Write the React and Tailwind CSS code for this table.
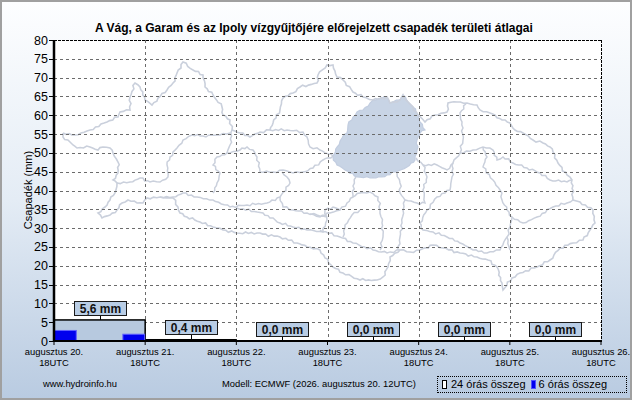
const FONT = '"Liberation Sans", Arial, sans-serif';

// plot geometry (page coordinates)
const X0 = 54;
const X1 = 601;
const Y0 = 341;
const YT = 40;
const DX = (X1 - X0) / 6;
const yv = (v) => Y0 - (v * (Y0 - YT)) / 80;

// jagged outline so the basin borders look like traced rivers
function jag(pts, amp = 0.8) {
  const out = [];
  let k = 0;
  for (let i = 0; i < pts.length - 1; i++) {
    const [x1, y1] = pts[i];
    const [x2, y2] = pts[i + 1];
    const len = Math.hypot(x2 - x1, y2 - y1) || 1;
    const n = Math.max(1, Math.round(len / 3));
    const nx = -(y2 - y1) / len;
    const ny = (x2 - x1) / len;
    for (let j = 0; j < n; j++) {
      const t = j / n;
      const o = j === 0 ? 0 : Math.sin(k * 2.7) * amp + Math.sin(k * 1.3) * amp * 0.6;
      k++;
      out.push([x1 + (x2 - x1) * t + nx * o, y1 + (y2 - y1) * t + ny * o]);
    }
  }
  out.push(pts[pts.length - 1]);
  return out.map((p) => p[0].toFixed(1) + ',' + p[1].toFixed(1)).join(' ');
}

const outline = [
  [63, 133], [75, 135], [90, 130], [107, 122], [118, 117], [120, 112], [130, 110], [130, 97], [135, 83], [140, 87],
  [145, 100], [152, 105], [158, 98], [167, 90], [173, 83], [177, 73], [183, 62], [193, 70], [203, 75], [205, 87],
  [213, 95], [222, 107], [223, 115], [230, 120], [232, 130], [240, 133], [250, 137], [260, 132], [270, 130], [273, 123],
  [280, 110], [283, 98], [293, 93], [300, 87], [317, 83], [318, 75], [327, 65], [333, 65], [337, 77], [343, 80],
  [353, 92], [363, 97], [373, 100], [387, 97], [390, 103], [400, 100], [403, 95], [408, 102], [413, 107], [418, 115],
  [425, 122], [435, 115], [447, 112], [448, 103], [457, 102], [467, 103], [477, 105], [480, 110], [490, 113], [502, 120],
  [510, 123], [515, 130], [523, 133], [533, 140], [543, 143], [550, 147], [553, 152], [558, 163], [567, 175], [572, 180],
  [573, 200], [580, 202], [593, 210], [595, 223], [590, 230], [583, 240], [573, 243], [560, 248], [550, 260], [537, 267],
  [520, 273], [512, 278], [503, 290], [502, 283], [497, 267], [488, 260], [477, 257], [460, 253], [443, 248], [433, 245],
  [420, 250], [410, 252], [400, 250], [390, 257], [388, 267], [383, 277], [377, 280], [360, 280], [343, 273], [333, 267],
  [325, 258], [320, 250], [307, 247], [297, 243], [280, 237], [257, 233], [237, 233], [223, 230], [213, 227], [200, 222],
  [187, 217], [180, 213], [178, 207], [173, 198], [160, 197], [147, 198], [143, 203], [137, 203], [128, 200], [122, 203],
  [117, 210], [110, 215], [102, 218], [98, 213], [105, 207], [110, 200], [115, 193], [117, 183], [113, 180], [118, 173],
  [118, 162], [113, 153], [110, 148], [103, 147], [98, 150], [90, 147], [77, 148], [73, 145], [70, 142], [63, 137], [63, 133],
];

const inner = [
  [[117, 183], [130, 182], [140, 178], [150, 182], [160, 182], [168, 177], [167, 165], [170, 157], [177, 148], [183, 140], [192, 135], [203, 136], [220, 135], [230, 133]],
  [[160, 197], [173, 197], [183, 193], [197, 197], [213, 200], [230, 207], [247, 205], [267, 203], [280, 197], [290, 183], [287, 177], [282, 172]],
  [[213, 193], [217, 183], [220, 173], [213, 165], [217, 157], [227, 153], [240, 150], [247, 147], [253, 150], [257, 157], [260, 172], [273, 172], [283, 170], [293, 173], [303, 172], [313, 168], [323, 160], [333, 156]],
  [[232, 130], [230, 145], [227, 153]],
  [[270, 130], [287, 130], [303, 132], [307, 137], [310, 147], [320, 150], [333, 156]],
  [[237, 208], [263, 213], [280, 223], [293, 227], [307, 230], [323, 232], [327, 220], [325, 210], [333, 207], [340, 210]],
  [[280, 197], [283, 207], [293, 210], [307, 213], [317, 215], [327, 217]],
  [[356, 177], [353, 186], [353, 197], [360, 193], [370, 192], [378, 197], [380, 210], [382, 223], [383, 237], [380, 250]],
  [[353, 197], [347, 203], [340, 210], [330, 213], [320, 217], [310, 214]],
  [[397, 173], [400, 183], [400, 193], [405, 200], [403, 210], [402, 223], [400, 237], [398, 250]],
  [[416, 158], [423, 165], [427, 177], [423, 190], [425, 203], [417, 203], [405, 200]],
  [[423, 165], [437, 165], [447, 170], [453, 163], [460, 153], [463, 140], [462, 122], [460, 113], [466, 104]],
  [[460, 153], [473, 150], [483, 147], [493, 150], [497, 160], [503, 157], [513, 163], [527, 168], [540, 173], [550, 180], [567, 182], [572, 180]],
  [[483, 147], [487, 157], [483, 167], [493, 180], [500, 190], [502, 200], [507, 210], [512, 217], [510, 227], [507, 237], [510, 250]],
  [[453, 163], [452, 177], [450, 190], [437, 197], [427, 210], [420, 223], [423, 230], [433, 232], [447, 237], [460, 243], [473, 250], [487, 253], [500, 250], [507, 237]],
  [[512, 217], [523, 223], [537, 217], [553, 207], [567, 203], [573, 200]],
  [[320, 230], [340, 237], [353, 243], [373, 250], [387, 253], [400, 250]],
  [[343, 237], [345, 225], [352, 215], [360, 210]],
];

const fillRegion = [
  [373, 100], [387, 97], [390, 103], [400, 100], [403, 95], [408, 102], [413, 107], [418, 115], [420, 122], [425, 130],
  [420, 133], [417, 140], [417, 150], [415, 160], [407, 167], [395, 172], [382, 177], [370, 178], [357, 177], [345, 170],
  [337, 165], [333, 157], [337, 147], [342, 138], [347, 133], [348, 125], [353, 117], [357, 112], [363, 110], [370, 103], [373, 100],
];

const six = [2.8, 0, 0.1, 1.8];
const totals = ['5,6 mm', '0,4 mm', '0,0 mm', '0,0 mm', '0,0 mm', '0,0 mm'];
const totalVals = [5.6, 0.4, 0, 0, 0, 0];

function Chart() {
  const ticks = [];
  for (let v = 0; v <= 80; v += 5) ticks.push(v);
  return (
    <svg width="628" height="336" viewBox="2 34 628 336" className="block" style={{ fontFamily: FONT }}>
      <rect x={X0} y={YT} width={X1 - X0} height={Y0 - YT} fill="#ffffff" />

      {/* basin map */}
      <polygon points={jag(fillRegion, 0.7)} fill="#c8d4e5" stroke="#c2cde0" strokeWidth="1.2" />
      <polyline points={jag(outline)} fill="none" stroke="#cad0dc" strokeWidth="1.6" />
      {inner.map((l, i) => (
        <polyline key={i} points={jag(l)} fill="none" stroke="#cad0dc" strokeWidth="1.5" />
      ))}

      {/* grid */}
      {ticks.filter((v) => v > 0 && v < 80).map((v) => (
        <line key={v} x1={X0} x2={X1} y1={Math.round(yv(v)) + 0.5} y2={Math.round(yv(v)) + 0.5} stroke="#6b6b6b" strokeDasharray="3 3" />
      ))}
      {[1, 2, 3, 4, 5].map((i) => (
        <line key={i} x1={Math.round(X0 + DX * i) + 0.5} x2={Math.round(X0 + DX * i) + 0.5} y1={YT} y2={Y0} stroke="#6b6b6b" strokeDasharray="3 3" />
      ))}
      <line x1={X0} x2={X1} y1={YT + 0.5} y2={YT + 0.5} stroke="#000" strokeDasharray="3 1" />
      <line x1={X1 + 0.5} x2={X1 + 0.5} y1={YT} y2={Y0} stroke="#000" strokeDasharray="3 1" />

      {/* 24h bars */}
      {totalVals.map((v, i) =>
        v > 0 ? (
          <rect key={i} x={X0 + DX * i} y={yv(v)} width={DX} height={Y0 - yv(v)} fill="#b7c9df" stroke="#000" strokeWidth={v > 1 ? 1.5 : 1} />
        ) : null
      )}
      {/* 6h bars */}
      {six.map((v, i) =>
        v > 0 ? (
          <rect key={i} x={X0 + (DX / 4) * i + 0.5} y={yv(v)} width={DX / 4 - 1} height={Y0 - yv(v)} fill="#0000ee" stroke="#6060ff" strokeWidth="1" />
        ) : null
      )}

      {/* axes */}
      <line x1={X0} x2={X0} y1={YT} y2={Y0 + 1} stroke="#000" strokeWidth="2.5" />
      <line x1={X0} x2={X1 + 1} y1={Y0} y2={Y0} stroke="#000" strokeWidth="2" />
      {ticks.map((v) => (
        <g key={v}>
          <line x1={49} x2={X0} y1={Math.round(yv(v)) + 0.5} y2={Math.round(yv(v)) + 0.5} stroke="#000" />
          <text x={48} y={yv(v) + 4.5} textAnchor="end" fontSize="12.5" fill="#000">{v}</text>
        </g>
      ))}
      <text transform="translate(28 190) rotate(-90)" textAnchor="middle" dominantBaseline="central" fontSize="11" fill="#000">
        Csapadék (mm)
      </text>

      {/* x labels */}
      {[0, 1, 2, 3, 4, 5, 6].map((i) => (
        <g key={i}>
          <line x1={X0 + DX * i} x2={X0 + DX * i} y1={Y0} y2={Y0 + 4} stroke="#000" />
          <text x={X0 + DX * i} y={355} textAnchor="middle" fontSize="9.4" fill="#000">augusztus {20 + i}.</text>
          <text x={X0 + DX * i} y={366} textAnchor="middle" fontSize="9.4" fill="#000">18UTC</text>
        </g>
      ))}

      {/* value labels */}
      {totals.map((t, i) => {
        const cx = Math.round(X0 + DX * (i + 0.5)) + 0.5;
        const top = yv(totalVals[i]);
        const bottom = Math.round(top - 5) + 0.5;
        return (
          <g key={i}>
            <line x1={cx} x2={cx} y1={bottom} y2={top} stroke="#000" />
            <rect x={cx - 26} y={bottom - 14} width="52" height="14" fill="#b9cde5" stroke="#1a1a1a" />
            <text x={cx} y={bottom - 3} textAnchor="middle" fontSize="12" fontWeight="bold" fill="#111">{t}</text>
          </g>
        );
      })}
    </svg>
  );
}

export default function App() {
  return (
    <div className="w-[633px] h-[401px] bg-white" style={{ fontFamily: FONT }}>
      <div className="w-[632px] h-[400px] border-2 border-[#a0a0a0] bg-linear-to-b from-[#fdfeff] via-[#e4ecf5] to-[#b9cbe1] flex flex-col">
        <div className="h-[32px] shrink-0 pt-[19px] pl-[93px] text-[12px] leading-[14px] font-bold text-black whitespace-nowrap">
          A Vág, a Garam és az Ipoly vízgyűjtőjére előrejelzett csapadék területi átlagai
        </div>
        <Chart />
        <div className="h-[28px] shrink-0 flex items-center pl-[41px] text-[9.4px] text-black whitespace-nowrap">
          <span className="w-[179px]">www.hydroinfo.hu</span>
          <span className="w-[215px]">Modell: ECMWF (2026. augusztus 20. 12UTC)</span>
          <div className="w-[190px] h-[17px] border border-dotted border-black flex items-center pl-[4px] text-[11px]">
            <span className="w-[5px] h-[9px] border border-black bg-white mr-[4px]" />
            <span>24 órás összeg</span>
            <span className="w-[5px] h-[9px] bg-[#0000ee] border border-[#5050ff] ml-[5px] mr-[3px]" />
            <span>6 órás összeg</span>
          </div>
        </div>
      </div>
    </div>
  );
}
